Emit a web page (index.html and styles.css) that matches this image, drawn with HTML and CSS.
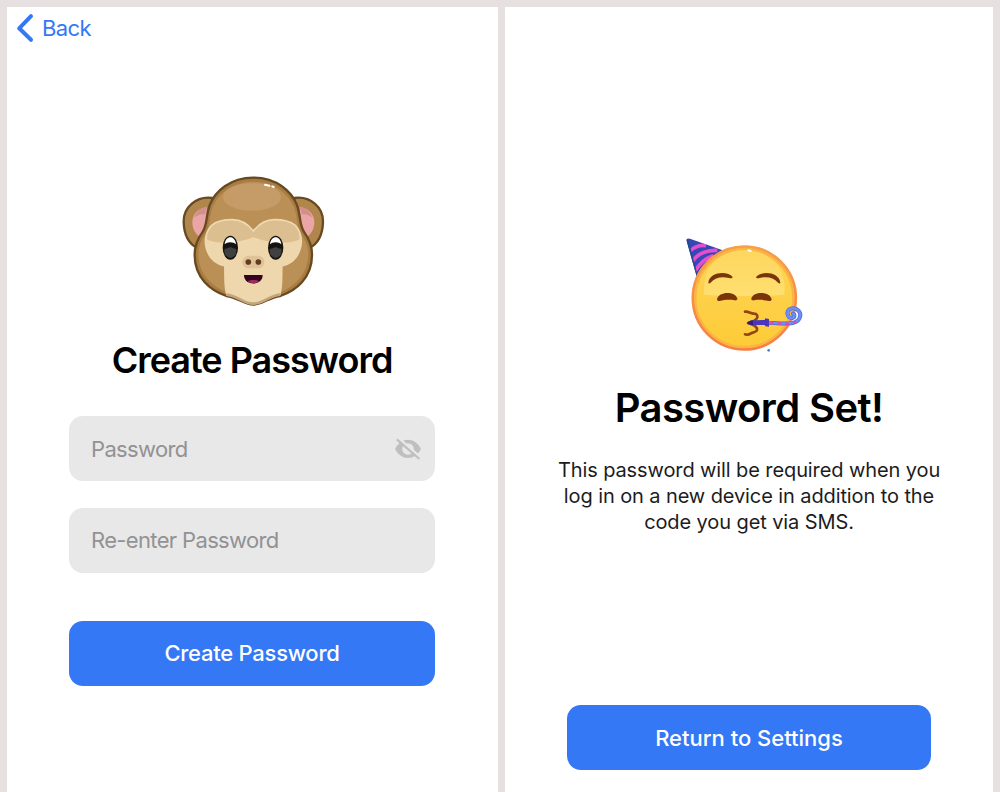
FILE: index.html
```html
<!DOCTYPE html>
<html lang="en">

<head>
  <meta charset="UTF-8">
  <meta name="viewport" content="width=device-width, initial-scale=1.0">
  <title>Create Password</title>
  <link rel="stylesheet" href="styles.css">
</head>

<body>
  <main class="screens">
    <section class="screen screen-create">
      <a class="back">
        <svg class="back-icon" width="18" height="30" viewBox="0 0 18 30">
          <path d="M15 3.2 L3.2 15.3 L15 26.8" fill="none" stroke="#3478f6" stroke-width="4" stroke-linecap="round" stroke-linejoin="round" />
        </svg>
        <span>Back</span>
      </a>

      <!-- monkey -->
      <svg class="monkey" width="150" height="150" viewBox="22 0 450 450">
        <g fill="#b0864c" stroke="#674a20" stroke-width="7">
          <path d="M128 99 C80 92 41 128 42 170 C43 210 58 236 82 248 L120 250 Z" />
          <path d="M374 99 C422 92 461 128 460 170 C459 210 444 236 420 248 L382 250 Z" />
        </g>
        <path d="M112 126 C82 130 68 150 68 174 C69 195 80 211 94 217 L108 190 Z" fill="#eba5a6" />
        <path d="M390 126 C420 130 434 150 434 174 C433 195 422 211 408 217 L394 190 Z" fill="#eba5a6" />
        <path d="M112 126 C90 130 78 142 74 158 C84 150 96 146 105 149 Z" fill="#d2908a" />
        <path d="M390 126 C412 130 424 142 428 158 C418 150 406 146 397 149 Z" fill="#d2908a" />
        <path d="M251 38 C180 38 137 80 121 118 C108 150 114 180 98 202 C82 224 75 242 75 268 C74 340 125 378 170 393 C205 397 224 419 251 419 C278 419 297 397 332 393 C377 378 428 340 427 268 C427 242 420 224 404 202 C388 180 394 150 381 118 C365 80 322 38 251 38 Z" fill="#a87c42" stroke="#674a20" stroke-width="7" />
        <path d="M251 50 C188 50 145 88 130 124 C117 156 122 186 106 209 C92 231 86 246 86 270 C88 330 128 364 170 382 L332 382 C374 364 414 330 416 270 C416 246 410 231 396 209 C380 186 385 156 372 124 C357 88 314 50 251 50 Z" fill="#ba9056" />
        <ellipse cx="247" cy="96" rx="87" ry="41" fill="#c59c67" />
        <path d="M251 198 C232 174 214 164 189 164 C163 164 141 168 126 181 C91 218 106 288 163 302 C164 334 162 366 170 391 C208 394 220 418 251 418 C282 418 294 394 332 391 C340 366 338 334 339 302 C397 288 409 218 377 181 C361 168 339 164 313 164 C288 164 270 174 251 198 Z" fill="#eed6ad" />
        <path d="M251 198 C232 174 214 164 189 164 C163 164 141 168 126 181 C116 193 111 208 113 224 C152 240 220 231 251 216 C282 231 350 240 389 224 C391 208 388 193 377 181 C361 168 339 164 313 164 C288 164 270 174 251 198 Z" fill="#dbbf90" />
        <path d="M163 302 C106 288 91 218 126 181 C141 168 163 164 189 164 C214 164 232 174 251 198 C270 174 288 164 313 164 C339 164 361 168 377 181 C409 218 397 288 339 302" fill="none" stroke="#efd8ae" stroke-width="5" />
        <path d="M170 389 C208 393 220 416 251 416 C282 416 294 393 332 389" fill="none" stroke="#c4a57b" stroke-width="8" />
        <g>
          <ellipse cx="182" cy="248" rx="23" ry="36" fill="#15120f" />
          <ellipse cx="318" cy="248" rx="23" ry="36" fill="#15120f" />
          <ellipse cx="182" cy="257" rx="18" ry="22" fill="#404040" />
          <ellipse cx="318" cy="257" rx="18" ry="22" fill="#404040" />
          <path d="M163 248 C163 226 201 226 201 248 C196 257 189 246 182 247 C174 246 168 257 163 248 Z" fill="#15120f" />
          <path d="M299 248 C299 226 337 226 337 248 C332 257 325 246 318 247 C311 246 304 257 299 248 Z" fill="#15120f" />
          <path d="M165 238 C168 210 196 210 199 238 C192 230 172 230 165 238 Z" fill="#fff" />
          <path d="M301 238 C304 210 332 210 335 238 C328 230 308 230 301 238 Z" fill="#fff" />
        </g>
        <rect x="218" y="272" width="66" height="38" rx="19" fill="#dfc397" />
        <circle cx="236" cy="291" r="8.5" fill="#633b25" />
        <circle cx="266" cy="291" r="8.5" fill="#633b25" />
        <path d="M223 330 H279 C280 364 222 364 223 330 Z" fill="#35051f" />
        <path d="M234 349 C243 344 259 344 268 349 C259 357 243 357 234 349 Z" fill="#9c2b60" />
        <path d="M286 59 L299 62 M308 64 L312 66" stroke="#fff" stroke-width="6" stroke-linecap="round" />
      </svg>

      <h1 class="create-title">Create Password</h1>

      <div class="field">
        <span>Password</span>
        <svg class="eye-off" width="28" height="22" viewBox="0 0 28 22">
          <path d="M1 11 C4 5 9 1.8 14 1.8 C19 1.8 24 5 27 11 C24 17 19 20 14 20 C9 20 4 17 1 11 Z" fill="#bfbfc1" />
          <circle cx="14" cy="11" r="5.8" fill="#e8e8e8" />
          <path d="M4.6 0 L27.3 20" stroke="#e8e8e8" stroke-width="2.4" />
          <path d="M2.8 1.4 L25.4 21" stroke="#bfbfc1" stroke-width="2.1" />
        </svg>
      </div>
      <div class="field">
        <span>Re-enter Password</span>
      </div>

      <button class="btn btn-create">Create Password</button>
    </section>

    <section class="screen screen-done">
      <!-- party face -->
      <svg class="party" width="150" height="135" viewBox="12 0 450 405">
        <defs>
          <linearGradient id="face" x1="0" y1="0" x2="0" y2="1">
            <stop offset="0" stop-color="#fdd55a" />
            <stop offset="1" stop-color="#fecb36" />
          </linearGradient>
          <linearGradient id="shine" x1="0" y1="0" x2="0" y2="1">
            <stop offset="0" stop-color="#fdd75e" />
            <stop offset="1" stop-color="#ffdf70" />
          </linearGradient>
          <linearGradient id="rim" x1="0" y1="0" x2="0" y2="1">
            <stop offset="0" stop-color="#f5a04a" />
            <stop offset="1" stop-color="#f87f42" />
          </linearGradient>
          <clipPath id="hat">
            <path d="M49 45 C51 40 56 40 62 42 L158 76 L80 154 Z" />
          </clipPath>
        </defs>
        <g clip-path="url(#hat)">
          <rect x="45" y="35" width="120" height="125" fill="#3748b4" />
          <path d="M60 78 Q82 58 108 62 M68 108 Q92 74 142 76 M76 138 Q94 104 130 92" fill="none" stroke="#e44fd0" stroke-width="11" />
          <path d="M51 42 L80 154" stroke="#244a91" stroke-width="7" />
        </g>
        <circle cx="223" cy="219" r="154" fill="url(#face)" stroke="url(#rim)" stroke-width="9" />
        <circle cx="223" cy="219" r="147" fill="none" stroke="#fbb544" stroke-width="7" />
        <path d="M103 209 C94 126 153 76 223 76 C293 76 352 126 343 209 C290 214 156 214 103 209 Z" fill="url(#shine)" />
        <path d="M235 76 L242 78" stroke="#fff" stroke-width="6" stroke-linecap="round" />
        <g fill="#7b350d">
          <path d="M115 173 C119 139 174 137 188 156 C187 161 182 160 177 159 C154 154 137 157 121 174 C118 176 115 176 115 173 Z" />
          <path d="M331 173 C327 139 272 137 258 156 C259 161 264 160 269 159 C292 154 309 157 325 174 C328 176 331 176 331 173 Z" />
          <path d="M141 223 C146 198 195 198 202 220 C203 225 198 227 194 226 C178 223 162 225 149 228 C145 229 141 227 141 223 Z" />
          <path d="M305 223 C300 198 251 198 244 220 C243 225 248 227 252 226 C268 223 284 225 297 228 C301 229 305 227 305 223 Z" />
        </g>
        <path d="M225 260 C236 259 243 266 251 266 C262 266 265 275 260 281 C255 289 240 292 236 295 C250 299 263 304 261 315 C259 323 251 320 243 325 C237 329 230 330 225 328" fill="none" stroke="#914612" stroke-width="8" stroke-linecap="round" stroke-linejoin="round" />
        <path d="M295 293 C332 295 373 301 386 284 C400 263 379 244 360 252 C347 260 352 280 367 279 C375 277 375 268 369 266" fill="none" stroke="#486bd9" stroke-width="12" stroke-linecap="round" />
        <path d="M295 293 C332 295 373 301 386 284 C400 263 379 244 360 252 C347 260 352 280 367 279 C375 277 375 268 369 266" fill="none" stroke="#6e8df5" stroke-width="8" stroke-linecap="round" />
        <path d="M300 294 C332 295 373 301 386 284" fill="none" stroke="#dc4aae" stroke-width="8" stroke-dasharray="10 13" />
        <path d="M230 294 C237 287 244 285 253 286 L284 285 L286 280 L297 282 L297 305 L286 304 L284 300 L253 300 C243 301 236 299 230 294 Z" fill="#4c35bd" />
        <path d="M230 294 C237 287 243 285 249 287 V300 C242 300 236 299 230 294 Z" fill="#312379" />
        <circle cx="296" cy="376" r="4" fill="#3f83e0" />
      </svg>

      <h1 class="done-title">Password Set!</h1>
      <p class="done-text">This password will be required when you<br>log in on a new device in addition to the<br>code you get via SMS.</p>

      <button class="btn btn-return">Return to Settings</button>
    </section>
  </main>
</body>

</html>
```
FILE: styles.css
```css
* {
  box-sizing: border-box;
}

body {
  margin: 0;
  background-color: #e7e0e1;
  font-family: Inter, "Liberation Sans", sans-serif;
  color: #000;
}

.screens {
  display: grid;
  grid-template-columns: 491px 488px;
  gap: 7px;
  height: 792px;
  padding: 7px 7px 0;
}

.screen {
  display: flex;
  flex-direction: column;
  align-items: center;
  background-color: #fff;
}

/* left screen */
.screen-create {
  padding-right: 1px;
}

.back {
  display: flex;
  align-items: center;
  align-self: flex-start;
  gap: 8px;
  height: 42px;
  padding-left: 9px;
  font-size: 22px;
  letter-spacing: -0.6px;
  color: #3478f6;
}

.monkey {
  margin-top: 116px;
}

h1 {
  margin: 0;
  font-weight: 600;
  white-space: nowrap;
}

.create-title {
  margin-top: 23px;
  font-size: 36px;
  line-height: 44px;
  letter-spacing: -1px;
}

.field {
  display: flex;
  align-items: center;
  justify-content: space-between;
  width: 366px;
  height: 65px;
  margin-top: 26.5px;
  padding: 0 13px 0 22px;
  border-radius: 14px;
  background-color: #e8e8e8;
  font-size: 22px;
  letter-spacing: -0.65px;
  color: #929294;
}

.create-title + .field {
  margin-top: 34px;
}

.btn {
  height: 65px;
  padding: 0;
  border: none;
  border-radius: 14px;
  background-color: #3478f6;
  font-family: inherit;
  font-size: 22px;
  font-weight: 500;
  color: #fff;
}

.btn-create {
  width: 366px;
  margin-top: 48px;
  letter-spacing: -0.25px;
}

/* right screen */
.party {
  margin-top: 218px;
}

.done-title {
  margin-top: 24px;
  font-size: 40px;
  line-height: 48px;
  letter-spacing: -0.6px;
}

.done-text {
  margin: 25px 0 0;
  font-size: 20px;
  line-height: 26px;
  letter-spacing: -0.1px;
  text-align: center;
  white-space: nowrap;
  color: #1c1c1e;
}

.btn-return {
  width: 364px;
  margin-top: 170px;
}
```
